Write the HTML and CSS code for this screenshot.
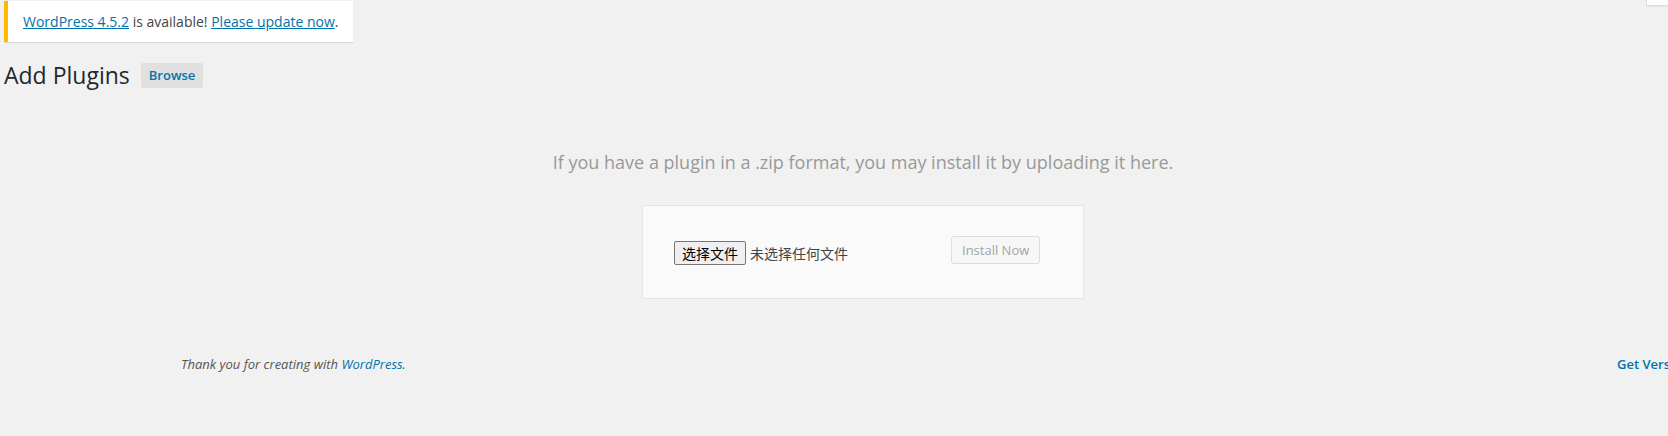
FILE: index.html
```html
<!DOCTYPE html>
<html lang="en">
<head>
<meta charset="utf-8">
<title>Add Plugins</title>
<link rel="stylesheet" href="styles.css">
</head>
<body>
<div class="screen-tab"></div>
<div class="notice-row">
  <div class="update-nag"><a href="#">WordPress 4.5.2</a> is available! <a href="#">Please update now</a>.</div>
</div>
<div class="title-row">
  <h1 class="page-title">Add Plugins</h1>
  <a class="page-title-action" href="#">Browse</a>
</div>
<div class="upload-plugin">
  <p class="install-help">If you have a plugin in a .zip format, you may install it by uploading it here.</p>
  <form class="upload-form">
    <div class="file-input">
      <button type="button" class="file-btn">选择文件</button>
      <span class="file-status">未选择任何文件</span>
    </div>
    <button type="button" class="install-btn" disabled>Install Now</button>
  </form>
</div>
<footer class="footer">
  <span class="footer-thanks">Thank you for creating with <a href="#">WordPress</a>.</span>
  <span class="footer-upgrade"><a href="#">Get Version 4.5.2</a></span>
</footer>
</body>
</html>
```
FILE: styles.css
```css
html {
  overflow: hidden;
}
body {
  margin: 0;
  background: #f1f1f1;
  color: #444;
  font-family: "Open Sans", "Noto Sans", sans-serif;
  font-size: 13px;
  height: 436px;
  position: relative;
}
a {
  color: #0073aa;
}
.screen-tab {
  position: absolute;
  top: -2px;
  left: 1646px;
  width: 30px;
  height: 6px;
  background: #fff;
  border: 1px solid #ddd;
  box-shadow: 0 1px 1px rgba(0,0,0,.04);
}
.notice-row {
  display: flex;
  padding: 1px 0 0 4px;
}
.update-nag {
  background: #fff;
  border-left: 4px solid #ffba00;
  box-shadow: 0 1px 1px 0 rgba(0,0,0,.1);
  padding: 11px 15px;
  font-size: 14px;
  line-height: 19px;
  color: #444;
}
.title-row {
  display: flex;
  align-items: center;
  margin-top: 19px;
  padding-left: 4px;
}
.page-title {
  margin: 0 11px 0 0;
  font-size: 23px;
  font-weight: 400;
  line-height: 29px;
  color: #23282d;
}
.page-title-action {
  background: #e0e0e0;
  border-radius: 2px;
  padding: 4px 8px;
  font-size: 13px;
  font-weight: 600;
  line-height: 17px;
  text-decoration: none;
  color: #0073aa;
}
.upload-plugin {
  margin-left: 182px;
  width: 1362px;
  margin-top: 60px;
}
.install-help {
  margin: 0;
  text-align: center;
  font-size: 18px;
  line-height: 24px;
  color: #999;
}
.upload-form {
  margin: 31px auto 0;
  width: 380px;
  height: 32px;
  padding: 30px;
  background: #fafafa;
  border: 1px solid #e5e5e5;
  display: flex;
  align-items: flex-start;
}
.file-input {
  display: flex;
  align-items: center;
  width: 273px;
  margin: 5px 4px 0 1px;
  font-family: "Noto Sans CJK SC", sans-serif;
  font-size: 14px;
}
.file-btn {
  font-family: "Noto Sans CJK SC", sans-serif;
  font-size: 14px;
  line-height: 19px;
  height: 24px;
  padding: 0 7px;
  margin: 0 4px 0 0;
  color: #000;
  background: #efefef;
  border: 1px solid #767676;
  border-radius: 2px;
}
.file-status {
  color: #444;
  line-height: 20px;
}
.install-btn {
  font-family: "Open Sans", sans-serif;
  font-size: 13px;
  line-height: 26px;
  height: 28px;
  padding: 0 10px 1px;
  color: #a0a5aa;
  background: #f7f7f7;
  border: 1px solid #ddd;
  border-radius: 3px;
}
.footer {
  display: grid;
  grid-template-columns: 1436px auto;
  padding-left: 181px;
  margin-top: 56px;
  font-size: 13px;
  line-height: 18px;
  white-space: nowrap;
}
.footer-thanks {
  font-style: italic;
  color: #555;
}
.footer-thanks a {
  text-decoration: none;
}
.footer-upgrade a {
  font-weight: 600;
  text-decoration: none;
}
```
